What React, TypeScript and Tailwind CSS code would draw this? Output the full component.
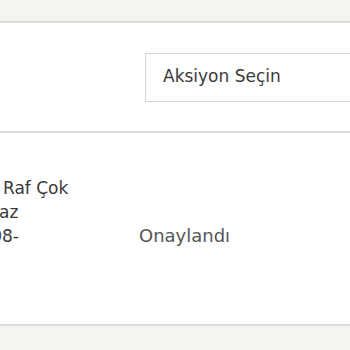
const App = () => {
  return (
    <div className="w-[350px] h-[350px] overflow-hidden bg-[#f5f4f1] font-['DejaVu_Sans',sans-serif]">
      <div className="h-[21px]" />
      <div className="bg-white border-y-2 border-[#dcdcdc]">
        <div className="h-[108px] flex items-center pl-[145px]">
          <div className="w-[260px] h-[49px] shrink-0 border border-[#d6d6d6] flex items-center pl-[17px] text-[17px] text-[#3a3a3a]">
            Aksiyon Seçin
          </div>
        </div>
        <div className="border-t-2 border-[#dcdcdc] h-[193px] flex items-center">
          <div className="w-[170px] shrink-0 -ml-[77px] text-[17px] leading-[24px] text-[#3a3a3a] -mt-[10px]">
            <div className="flex whitespace-nowrap">
              <span className="w-[80px] shrink-0 text-right">Ürün&nbsp;</span>
              <span>Raf Çok</span>
            </div>
            <div className="flex whitespace-nowrap">
              <span className="w-[76px] shrink-0 text-right">Bo</span>
              <span>az</span>
            </div>
            <div className="flex whitespace-nowrap">
              <span className="w-[79px] shrink-0 text-right">2023-0</span>
              <span>8-</span>
            </div>
            <div className="flex whitespace-nowrap">
              <span className="w-[77px] shrink-0 text-right">15</span>
            </div>
          </div>
          <div className="ml-[46px] text-[18px] text-[#555] pt-[14px]">Onaylandı</div>
        </div>
      </div>
    </div>
  );
};

export default App;
